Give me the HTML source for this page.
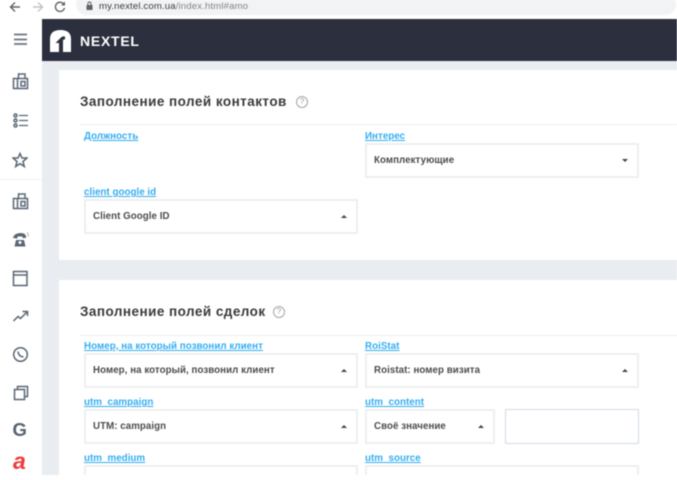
<!DOCTYPE html>
<html><head><meta charset="utf-8"><style>
*{box-sizing:border-box}
html,body{margin:0;padding:0;width:677px;height:480px;overflow:hidden;background:#fff;font-family:"Liberation Sans",sans-serif}
#root{position:relative;width:677px;height:480px;overflow:hidden;filter:blur(.5px)}
.abs,.card,.sel,.lb,.t,.div,.q,svg{position:absolute}
.card{background:#fff;left:59px;width:618px}
.t{left:80px;font-size:13.5px;font-weight:bold;color:#3a3a3c;letter-spacing:.46px;line-height:16px;white-space:nowrap}
.div{left:80px;right:0;height:1px;background:#eceef0}
.q{width:12px;height:12px;border:1.3px solid #a5a5a5;border-radius:50%;font-size:8px;line-height:10px;text-align:center;color:#999}
.lb{font-size:9.8px;font-weight:bold;color:#35aef0;text-decoration:underline;line-height:12px;white-space:nowrap;letter-spacing:.02px;margin-top:1px}
.sel{height:35px;border:2px solid #eeefef;background:#fff;font-size:9.7px;font-weight:bold;color:#4c4c4e;line-height:31px;padding-left:7px;white-space:nowrap;letter-spacing:.08px}
.w{width:274px}.a{position:absolute;right:9px;top:14px;width:0;height:0;border-left:3px solid transparent;border-right:3px solid transparent}
.up{border-bottom:3px solid #444}.dn{border-top:3px solid #444}
.ic{fill:none;stroke:#5a6775;stroke-width:1.5}
</style></head><body><div id="root">
<!-- browser bar -->
<div class="abs" style="left:0;top:0;width:677px;height:18px;background:#fff"></div>
<div class="abs" style="left:76px;top:-6px;width:600px;height:21px;background:#f1f3f4;border-radius:11px"></div>
<svg style="left:8px;top:0" width="60" height="14" viewBox="0 0 60 14"><path d="M12 7H3M7 2.500 2.500 7 7 11.500" fill="none" stroke="#5f6368" stroke-width="1.400"/><path d="M25 7h9M30 2.500 34.500 7 30 11.500" fill="none" stroke="#c0c3c6" stroke-width="1.400"/><path d="M56 4.500A4.600 4.600 0 1 0 56.500 8" fill="none" stroke="#5f6368" stroke-width="1.400"/><path d="M57 1.500v4h-4z" fill="#5f6368"/></svg>
<svg style="left:85px;top:1px" width="9" height="10" viewBox="0 0 9 10"><rect x="1.500" y="4" width="6" height="5" fill="#5f6368"/><path d="M3 4V2.500a1.500 1.500 0 0 1 3 0V4" fill="none" stroke="#5f6368"/></svg>
<div class="abs" style="left:99px;top:0;font-size:9.600px;line-height:13px;color:#3c4043;white-space:nowrap;letter-spacing:.14px">my.nextel.com.ua<span style="color:#80868b">/index.html#amo</span></div>
<!-- main bg -->
<div class="abs" style="left:42px;top:19px;width:635px;height:456px;background:#e9ecf0"></div>
<div class="abs" style="left:42px;top:19px;width:635px;height:42px;background:#2c2f3d"></div>
<svg style="left:49px;top:29px" width="23" height="24" viewBox="0 0 23 24"><path d="M1 23V10Q1 1 11.500 1 22 1 22 10V23Z" fill="#fff"/><path d="M10 23V14H6.500L12 8.500Q13.500 7 16 7.500V10.500Q14 10 14 12V23Z" fill="#2c2f3d"/></svg>
<div class="abs" style="left:80px;top:33px;font-size:14px;font-weight:bold;color:#fff;line-height:16px;letter-spacing:.75px">NEXTEL</div>
<!-- sidebar -->
<div class="abs" style="left:0;top:179px;width:42px;height:1px;background:#eef0f2"></div>
<svg style="left:10px;top:30px" width="22" height="18" viewBox="0 0 22 18"><path d="M4 4.500H17M4 9.500H17M4 14H17" stroke="#6a7580" stroke-width="1.800"/></svg>
<svg style="left:12px;top:72px" width="18" height="18" viewBox="0 0 18 18"><path class="ic" d="M1.500 6.500H15.500V16.500H1.500ZM5.500 6.500V16.500M6.500 6V2H13V6M9 9.500H13V14H9Z" stroke-width="1.300"/></svg>
<svg style="left:12px;top:112px" width="18" height="18" viewBox="0 0 18 18"><path d="M7 3.500H16M7 8.500H16M7 13.500H16" stroke="#5a6775" stroke-width="1.300"/><circle cx="3.500" cy="3.500" r="1.500" class="ic" stroke-width="1.100"/><circle cx="3.500" cy="8.500" r="1.500" class="ic" stroke-width="1.100"/><circle cx="3.500" cy="13.500" r="1.500" class="ic" stroke-width="1.100"/></svg>
<svg style="left:12px;top:152px" width="16" height="16" viewBox="0 0 16 16"><path class="ic" d="M8 1.500 10 6H15L11 9.500 12.300 14.500 8 11.700 3.700 14.500 5 9.500 1 6H6Z"/></svg>
<svg style="left:12px;top:192px" width="18" height="18" viewBox="0 0 18 18"><path class="ic" d="M1.500 6.500H15.500V16.500H1.500ZM5.500 6.500V16.500M6.500 6V2H13V6M9 9.500H13V14H9Z" stroke-width="1.300"/></svg>
<svg style="left:12px;top:231px" width="18" height="18" viewBox="0 0 18 18"><path d="M1 7Q2 2 9 2 13 2 14 5V7H10.500V5.500H5.500V7.500Z" fill="#5a6775"/><path d="M4 9H12L13.500 15.500H2.500Z" fill="#5a6775"/><circle cx="8" cy="11.500" r="1.500" fill="#fff"/><path d="M15 1.500Q17 3 16 5.500" stroke="#aab2ba" fill="none"/></svg>
<svg style="left:12px;top:270px" width="17" height="17" viewBox="0 0 17 17"><path class="ic" d="M1.500 1.500H15V15.500H1.500ZM1.500 5H15" stroke-width="1.400"/></svg>
<svg style="left:12px;top:308px" width="17" height="16" viewBox="0 0 17 16"><path class="ic" d="M1.500 13 6 8.500 8.500 10.500 15 4M10.500 3.500H15.500V8" stroke-width="1.500"/></svg>
<svg style="left:12px;top:346px" width="17" height="17" viewBox="0 0 17 17"><circle cx="8.500" cy="8.500" r="6.800" class="ic"/><path d="M6 5.500Q6.500 10.500 11.500 11" class="ic" stroke-width="1.800"/></svg>
<svg style="left:13px;top:385px" width="16" height="16" viewBox="0 0 16 16"><path class="ic" d="M4.500 1.500H14.500V11.500H11.500V4.500H4.500ZM1.500 4.500H11.500V14.500H1.500Z" stroke-width="1.400"/></svg>
<div class="abs" style="left:12.500px;top:420px;font-size:18.500px;font-weight:bold;color:#56636f;line-height:19px">G</div>
<div class="abs" style="left:13px;top:449px;font-style:italic;font-size:23px;font-weight:bold;color:#ee3b3b;line-height:24px">a</div>
<!-- card 1 -->
<div class="card" style="top:70px;height:190px"></div>
<div class="t" style="top:94px">Заполнение полей контактов</div>
<div class="q" style="left:296px;top:96px">?</div>
<div class="div" style="top:124px"></div>
<div class="lb" style="left:84px;top:130px">Должность</div>
<div class="lb" style="left:365px;top:130px">Интерес</div>
<div class="sel w" style="left:365px;top:143px">Комплектующие<div class="a dn"></div></div>
<div class="lb" style="left:84px;top:186px">client google id</div>
<div class="sel w" style="left:84px;top:199px">Client Google ID<div class="a up"></div></div>
<!-- card 2 -->
<div class="card" style="top:280px;height:195px"></div>
<div class="t" style="top:304px">Заполнение полей сделок</div>
<div class="q" style="left:273px;top:306px">?</div>
<div class="div" style="top:335px"></div>
<div class="lb" style="left:84px;top:340px">Номер, на который позвонил клиент</div>
<div class="lb" style="left:365px;top:340px">RoiStat</div>
<div class="sel w" style="left:84px;top:353px">Номер, на который, позвонил клиент<div class="a up"></div></div>
<div class="sel w" style="left:365px;top:353px">Roistat: номер визита<div class="a up"></div></div>
<div class="lb" style="left:84px;top:396px">utm_campaign</div>
<div class="lb" style="left:365px;top:396px">utm_content</div>
<div class="sel w" style="left:84px;top:409px">UTM: campaign<div class="a up"></div></div>
<div class="sel" style="left:365px;top:409px;width:130px">Своё значение<div class="a up"></div></div>
<div class="abs" style="left:505px;top:409px;width:134px;height:35px;border:1.500px solid #cfd9e4;border-radius:2px;background:#fff"></div>
<div class="lb" style="left:84px;top:452px">utm_medium</div>
<div class="lb" style="left:365px;top:452px">utm_source</div>
<div class="abs" style="left:84px;top:465px;width:274px;height:10px;border:2px solid #eeefef;border-bottom:0"></div>
<div class="abs" style="left:365px;top:465px;width:274px;height:10px;border:2px solid #eeefef;border-bottom:0"></div>
</div></body></html>
